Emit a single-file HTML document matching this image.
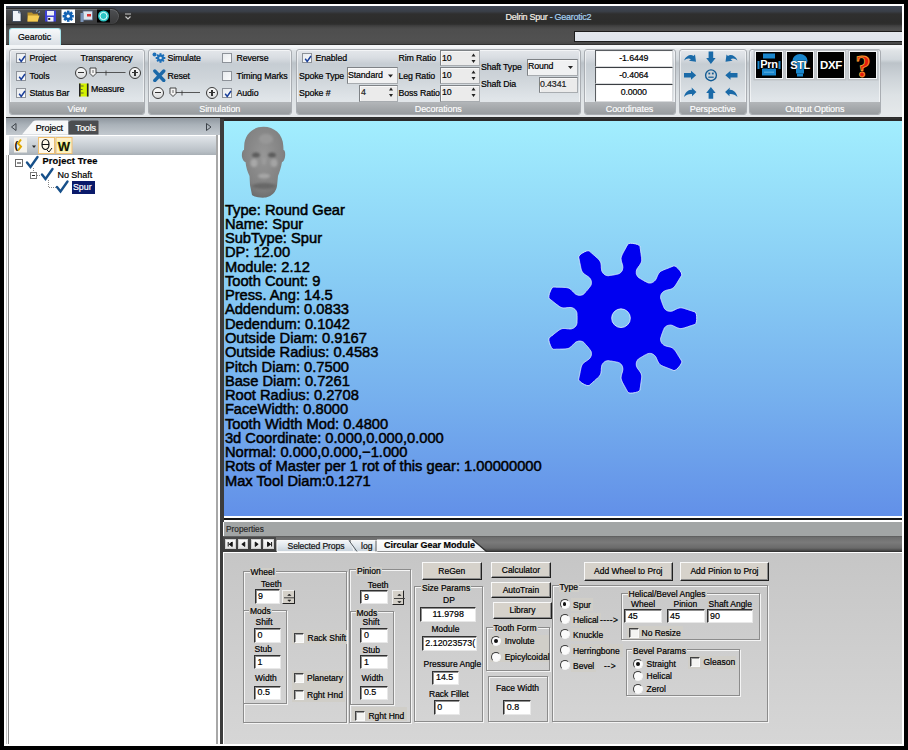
<!DOCTYPE html>
<html><head><meta charset="utf-8">
<style>
*{margin:0;padding:0;box-sizing:border-box}
html,body{width:908px;height:750px;overflow:hidden;background:#000}
body{position:relative;font-family:"Liberation Sans",sans-serif;font-size:9.4px;color:#000}
.a{position:absolute}
.t{position:absolute;white-space:nowrap;line-height:1;-webkit-text-stroke:.2px currentColor}
/* window */
#win{left:4px;top:4px;width:900px;height:742px;background:#fff}
#title{left:6px;top:6px;width:896px;height:19px;background:linear-gradient(#3f4654 0,#3a3f48 28%,#2f2f2f 42%,#2c2c2b 90%,#343434 100%)}
#tabrow{left:6px;top:25px;width:896px;height:21px;background:linear-gradient(#3a3a3a 0,#484848 12%,#4e4e4e 20%,#515151 70%,#4a4a4a 88%,#2c2c2c 94%,#303030 100%)}
#ribbon{left:6px;top:45px;width:896px;height:72px;background:linear-gradient(#f4f6f8 0,#f4f6f8 3%,#dfe3e6 8%,#d2d8dd 20%,#bcc3c9 25%,#cdd3d8 45%,#dde2e5 70%,#e6e9eb 100%)}
.grp{position:absolute;top:48.5px;height:66px;border:1px solid #a9adb2;border-radius:3px;background:linear-gradient(#e4e7eb 0,#d9dde2 12%,#c6cdd3 22%,#cfd5da 45%,#dfe4e8 75%,#e6eaed 100%);box-shadow:inset 0 0 0 1px rgba(255,255,255,.55)}
.glab{position:absolute;left:0;right:0;bottom:0;height:11.5px;background:linear-gradient(#b3b6b9,#989c9f);color:#fff;text-align:center;font-size:9px;line-height:14.3px;border-radius:0 0 2px 2px;-webkit-text-stroke:.15px #fff;letter-spacing:-.1px}
#sep{left:6px;top:117px;width:896px;height:3px;background:linear-gradient(#2a2a2a,#3a3a3a)}
/* left panel */
#lp{left:6px;top:119px;width:214px;height:625px;background:#fff}
#lptabs{left:6px;top:118px;width:214px;height:16.5px;background:linear-gradient(#8f979f,#aab2b9 40%,#c3c9cf)}
#lptool{left:9px;top:135.5px;width:208px;height:19.5px;background:linear-gradient(#e2e6ea,#cdd3d8 40%,#b9c0c6 80%,#a9b0b6)}
#split{left:219.5px;top:119px;width:4px;height:625px;background:#3c3c3c}
/* viewport */
#vp{left:224.4px;top:119px;width:677.6px;height:396.5px;background:linear-gradient(#a2eefe 0%,#88ccf4 40%,#76b0ee 70%,#6290e8 100%);border-top:2px solid #2a2a2a}
#vptext{left:224.9px;top:202.6px;font-size:14.7px;line-height:14.26px;color:#000;white-space:nowrap;-webkit-text-stroke:.5px #000}
/* properties */
#pwhite{left:224px;top:515.5px;width:678px;height:7px;background:#fff}
#pblack{left:224px;top:518px;width:678px;height:2px;background:#141414}
#phdr{left:223.3px;top:522px;width:678.7px;height:14px;background:#a2a5a5;border-left:1.2px solid #fff}
#ptabs{left:223.3px;top:536px;width:678.7px;height:15.5px;background:linear-gradient(#5a5a5a 0,#6e6e6e 10%,#7a7a7a 40%,#6a6a6a 75%,#4a4a4a 90%,#2a2a2a 100%)}
#pcont{left:223.3px;top:551.5px;width:678.7px;height:192.5px;background:linear-gradient(#c6c6c6,#d6d6d6);border-top:1.8px solid #fff;border-left:1.5px solid #fff}

.cb{position:absolute;width:10px;height:10px;border:1px solid #8d9299;background:linear-gradient(135deg,#e8ebee,#fbfcfd);}
.rt{font-size:8.8px;letter-spacing:-.12px}
.circ{position:absolute;width:12px;height:12px;border:1.2px solid #3a3a3a;border-radius:50%;background:linear-gradient(#fdfdfd,#d8dadc)}
.circ:before{content:"";position:absolute;left:2px;top:4.3px;width:6px;height:1.4px;background:#333}
.circ.p:after{content:"";position:absolute;left:4.3px;top:2px;width:1.4px;height:6px;background:#333}
.inp{position:absolute;background:#ebebeb;border:1px solid #7e8286;border-right-color:#a8acb0;border-bottom-color:#a8acb0;box-shadow:inset 1px 1px 0 #f8f8f8}
.sp{position:absolute;width:8px;height:14px}
.big{position:absolute;width:26px;height:26px;background:#000;outline:1.5px solid #f4f6f8;box-shadow:0 0 0 2.5px #c0c4c8}

.win{position:absolute;background:#fff;border-style:solid;border-width:1.5px 1px 1px 1.5px;border-color:#303030 #e8e8e8 #e8e8e8 #303030;box-shadow:inset 1px 1px 0 #909090}
.gb{position:absolute;border:1px solid #8c8c8c;box-shadow:1px 1px 0 #f4f4f4 inset,1px 1px 0 #f4f4f4}
.btn{position:absolute;background:#d6d2cb;border-style:solid;border-width:1px 1.5px 1.5px 1px;border-color:#f8f8f8 #202020 #202020 #f8f8f8;box-shadow:inset -1px -1px 0 #8c8c8c}
.wcb{position:absolute;width:10px;height:10px;background:#f4f4f2;border-style:solid;border-width:1.5px 1px 1px 1.5px;border-color:#404040 #fafafa #fafafa #404040;box-shadow:inset 1px 1px 0 #a0a0a0}
.rad{position:absolute;width:10px;height:10px;border-radius:50%;background:#fbfbfb;border:1.5px solid;border-color:#3a3a3a #f4f4f4 #f4f4f4 #3a3a3a;transform:rotate(0deg)}
.rad i{position:absolute;left:2px;top:2px;width:3.8px;height:3.8px;border-radius:50%;background:#111}
.spn{position:absolute;background:#d4d0c8;border-style:solid;border-width:1px 1.5px 1.5px 1px;border-color:#f0f0f0 #222 #222 #f0f0f0}
.nav{position:absolute;background:linear-gradient(#fafafa,#e4e4e4);border:.5px solid #d0d0d0}
</style></head><body>
<div id="win" class="a"></div>
<div id="title" class="a"></div>
<div id="tabrow" class="a"></div>
<!-- QAT -->
<div class="a" style="left:6px;top:8px;width:114px;height:17px;border-radius:0 9px 9px 0;background:linear-gradient(#4e5054,#434446 50%,#3a3a3b);border:1px solid #2a2a2a;border-left:none;box-shadow:inset 0 1px 0 rgba(255,255,255,.15),inset -1px 0 0 rgba(255,255,255,.1)"></div>
<svg class="a" style="left:0;top:0" width="130" height="26">
 <path d="M12.5 10.5h6l2.5 2.5v8.5h-8.5z" fill="#eef2f8" stroke="#24344c" stroke-width=".7"/>
 <path d="M18.5 10.5v2.5h2.5" fill="#a8bcd4" stroke="#24344c" stroke-width=".5"/>
 <path d="M27.5 12.5h4.5l1 1.3h5v7.7h-10.5z" fill="#b8902c"/><path d="M28 15.5h11.5l-1.8 6H27.5z" fill="#f4cc54"/>
 <path d="M36 11.5l1.5-1.2M38.5 12.5l1.5-.8" stroke="#8ab8e8" stroke-width="1"/>
 <rect x="45" y="10.5" width="11" height="11" fill="#3d40d8"/><rect x="47" y="11" width="7" height="4.5" fill="#eef0f8"/><rect x="47.5" y="17" width="6" height="4.5" fill="#eef0f8"/><rect x="48.2" y="18" width="2" height="2" fill="#222"/>
 <rect x="61.5" y="9.5" width="13.5" height="13.5" fill="#fff"/>
 <g transform="translate(68.2,16.2)" fill="#1262b4"><circle r="4"/><rect x="-1.3" y="-5.6" width="2.6" height="11.2"/><rect x="-5.6" y="-1.3" width="11.2" height="2.6"/><g transform="rotate(45)"><rect x="-1.3" y="-5.6" width="2.6" height="11.2"/><rect x="-5.6" y="-1.3" width="11.2" height="2.6"/></g><circle r="1.6" fill="#fff"/></g>
 <rect x="83" y="11" width="9.5" height="9" fill="#dce4ee" stroke="#5c7090" stroke-width=".8"/><rect x="80.5" y="13" width="3" height="9" fill="#7a94b8"/><rect x="87" y="14" width="4" height="2.5" fill="#d83030"/>
 <rect x="97" y="9.5" width="13" height="13" fill="#000"/><circle cx="103.5" cy="16" r="5.5" fill="#2cc4c4"/><circle cx="103.5" cy="16" r="3.6" fill="none" stroke="#e8ffff" stroke-width="1"/>
</svg>
<svg class="a" style="left:124px;top:13px" width="8" height="8"><path d="M1 1h6M1.5 3.5l2.5 2.5 2.5-2.5" stroke="#c8c8c8" stroke-width="1.2" fill="none"/></svg>
<div class="t" style="left:505.5px;top:12.6px;font-size:9px;letter-spacing:-.28px;color:#f4f0e8">Delrin Spur <span style="color:#a6d2f2">- Gearotic2</span></div>
<!-- tab -->
<div class="a" style="left:9px;top:28px;width:52px;height:19px;border-radius:3px 3px 0 0;background:linear-gradient(#f6f8fa,#e4e8ec 60%,#d8dde2);border:1px solid #a8e4ec;border-bottom:none"></div>
<div class="t" style="left:18px;top:33.3px;font-size:8.9px;letter-spacing:-.05px">Gearotic</div>
<div class="a" style="left:574px;top:30.5px;width:328px;height:11px;background:linear-gradient(#e4e8ee,#dfe4ec);border:1px solid #1c1c1c;border-right:none"></div>

<div id="ribbon" class="a"></div>
<div class="grp" style="left:9px;width:136px"><div class="glab">View</div></div>
<div class="grp" style="left:147.5px;width:144.5px"><div class="glab">Simulation</div></div>
<div class="grp" style="left:295.5px;width:285.5px"><div class="glab">Decorations</div></div>
<div class="grp" style="left:583.5px;width:92px"><div class="glab">Coordinates</div></div>
<div class="grp" style="left:679px;width:67.5px"><div class="glab">Perspective</div></div>
<div class="grp" style="left:749px;width:131.5px"><div class="glab">Output Options</div></div>

<!-- View group content -->
<div class="cb" style="left:15.5px;top:53px"><svg width="10" height="10" class="a" style="left:0;top:0"><path d="M2.2 4.8l2 2.6 3.8-5.4" stroke="#1a3f9a" stroke-width="1.5" fill="none"/></svg></div><div class="t rt" style="left:29.5px;top:54.2px">Project</div>
<div class="cb" style="left:15.5px;top:70.5px"><svg width="10" height="10" class="a" style="left:0;top:0"><path d="M2.2 4.8l2 2.6 3.8-5.4" stroke="#1a3f9a" stroke-width="1.5" fill="none"/></svg></div><div class="t rt" style="left:29.5px;top:71.7px">Tools</div>
<div class="cb" style="left:15.5px;top:87.5px"><svg width="10" height="10" class="a" style="left:0;top:0"><path d="M2.2 4.8l2 2.6 3.8-5.4" stroke="#1a3f9a" stroke-width="1.5" fill="none"/></svg></div><div class="t rt" style="left:29.5px;top:88.7px">Status Bar</div>
<div class="t rt" style="left:80.5px;top:54.2px">Transparency</div>
<div class="circ" style="left:75px;top:66.5px"></div>
<svg class="a" style="left:88px;top:66px" width="42" height="12"><path d="M6 6.5h31.5M18 4.5v5" stroke="#333" stroke-width=".8"/><path d="M2 2h6v5.5l-3 3-3-3z" fill="#f4f4f4" stroke="#333" stroke-width=".9"/><path d="M5 4v3" stroke="#333" stroke-width=".7"/></svg>
<div class="circ p" style="left:129px;top:66.5px"></div>
<svg class="a" style="left:79px;top:83px" width="11" height="14"><rect x="0" y="0.5" width="9.5" height="13" fill="#d4f200"/><rect x="0" y="0.5" width="1.6" height="13" fill="#222"/><rect x="7.9" y="0.5" width="1.6" height="13" fill="#222"/><path d="M1.6 3h3M1.6 6.5h2M1.6 10h3" stroke="#444" stroke-width=".8"/></svg>
<div class="t rt" style="left:91px;top:85.2px">Measure</div>
<!-- Simulation -->
<svg class="a" style="left:152px;top:52px" width="14" height="11"><circle cx="2.5" cy="2.5" r="2" fill="#1d6fb8"/><g transform="translate(8.5,6)" fill="#1d6fb8"><circle r="3.4"/><rect x="-1" y="-4.8" width="2" height="9.6"/><rect x="-4.8" y="-1" width="9.6" height="2"/><rect x="-1" y="-4.8" width="2" height="9.6" transform="rotate(45)"/><rect x="-4.8" y="-1" width="9.6" height="2" transform="rotate(45)"/><circle r="1.3" fill="#e0e4e8"/></g></svg>
<div class="t rt" style="left:167.5px;top:54.2px">Simulate</div>
<svg class="a" style="left:152px;top:68px" width="14" height="14"><path d="M2.8 3L11.8 12.5M11.8 3L2.8 12.5" stroke="#1a68a8" stroke-width="3.3" stroke-linecap="round"/></svg>
<div class="t rt" style="left:167.5px;top:71.7px">Reset</div>
<div class="circ" style="left:152px;top:86.5px"></div>
<svg class="a" style="left:168px;top:86px" width="34" height="12"><path d="M6 6.5h26M14 4.5v5" stroke="#333" stroke-width=".8"/><path d="M2 2h6v5.5l-3 3-3-3z" fill="#f4f4f4" stroke="#333" stroke-width=".9"/><path d="M5 4v3" stroke="#333" stroke-width=".7"/></svg>
<div class="circ p" style="left:206px;top:86.5px"></div>
<div class="cb" style="left:222px;top:53px"></div><div class="t rt" style="left:236.5px;top:54.2px">Reverse</div>
<div class="cb" style="left:222px;top:70.5px"></div><div class="t rt" style="left:236.5px;top:71.7px">Timing Marks</div>
<div class="cb" style="left:222px;top:87.5px"><svg width="10" height="10" class="a" style="left:0;top:0"><path d="M2.2 4.8l2 2.6 3.8-5.4" stroke="#1a3f9a" stroke-width="1.5" fill="none"/></svg></div><div class="t rt" style="left:236.5px;top:88.7px">Audio</div>
<!-- Decorations -->
<div class="cb" style="left:302px;top:53px"><svg width="10" height="10" class="a" style="left:0;top:0"><path d="M2.2 4.8l2 2.6 3.8-5.4" stroke="#1a3f9a" stroke-width="1.5" fill="none"/></svg></div><div class="t rt" style="left:315.5px;top:54.2px">Enabled</div>
<div class="t rt" style="left:299px;top:71.7px">Spoke Type</div>
<div class="t rt" style="left:299px;top:88.7px">Spoke #</div>
<div class="inp" style="left:346.5px;top:67px;width:51px;height:17px;background:#f0f1f2"></div><div class="t rt" style="left:348px;top:71.2px">Standard</div>
<div class="inp" style="left:358.5px;top:84.5px;width:39px;height:17px"></div><div class="t rt" style="left:361px;top:88.2px;color:#222">4</div>
<div class="t rt" style="left:398.5px;top:54.2px">Rim Ratio</div>
<div class="t rt" style="left:398.5px;top:71.7px">Leg Ratio</div>
<div class="t rt" style="left:398.5px;top:88.7px">Boss Ratio</div>
<div class="inp" style="left:440px;top:50px;width:39.5px;height:16px"></div><div class="t rt" style="left:442px;top:53.7px">10</div>
<div class="inp" style="left:440px;top:67px;width:39.5px;height:17px"></div><div class="t rt" style="left:442px;top:71.2px">10</div>
<div class="inp" style="left:440px;top:84.5px;width:39.5px;height:17px"></div><div class="t rt" style="left:442px;top:88.2px">10</div>
<div class="t rt" style="left:481px;top:62.7px">Shaft Type</div>
<div class="t rt" style="left:481px;top:80.2px">Shaft Dia</div>
<div class="inp" style="left:526.5px;top:58.5px;width:51px;height:17px;background:#f0f1f2"></div><div class="t rt" style="left:528px;top:62.2px">Round</div>
<div class="inp" style="left:538.5px;top:76.5px;width:39px;height:16px"></div><div class="t rt" style="left:540px;top:80.2px;color:#222">0.4341</div>
<svg class="a" style="left:340px;top:50px" width="240" height="52">
 <path d="M48 24.5h5l-2.5 3z" fill="#222"/>
 <path d="M228 16h5l-2.5 3z" fill="#222"/>
 <path d="M131.5 6.5l2-3 2 3zM131.5 10l2 3 2-3z" fill="#222"/>
 <path d="M131.5 23.5l2-3 2 3zM131.5 27l2 3 2-3z" fill="#222"/>
 <path d="M131.5 40.5l2-3 2 3zM131.5 44l2 3 2-3z" fill="#222"/>
 <path d="M49 40.5l2-3 2 3zM49 44l2 3 2-3z" fill="#222"/>
</svg>
<!-- Coordinates -->
<div class="inp" style="left:594.5px;top:49.5px;width:78.5px;height:17px;background:#fff;border-color:#5a5e62 #d8dadc #d8dadc #5a5e62"></div>
<div class="inp" style="left:594.5px;top:66.5px;width:78.5px;height:17.5px;background:#fff;border-color:#3a3e42 #d8dadc #d8dadc #5a5e62"></div>
<div class="inp" style="left:594.5px;top:84px;width:78.5px;height:17.5px;background:#fff;border-color:#3a3e42 #d8dadc #d8dadc #5a5e62"></div>
<div class="t rt" style="left:594.5px;width:78.5px;text-align:center;top:53.7px">-1.6449</div>
<div class="t rt" style="left:594.5px;width:78.5px;text-align:center;top:70.7px">-0.4064</div>
<div class="t rt" style="left:594.5px;width:78.5px;text-align:center;top:88.2px">0.0000</div>
<!-- Perspective -->
<svg class="a" style="left:680px;top:48px" width="64" height="54" viewBox="0 0 64 54" fill="#1a6aa8">
 <path d="M4 12.5C6 7.5 11 5.8 13.5 8L15 6.5 16 13.8 9 12.8 10.9 11.2C9 9.8 6.5 10.2 4 12.5Z"/>
 <path d="M57.5 12.5C55.5 7.5 50.5 5.8 48 8L46.5 6.5 45.5 13.8 52.5 12.8 50.6 11.2C52.5 9.8 55 10.2 57.5 12.5Z"/>
 <path d="M28.6 3.6H33.2V10H35.6L30.9 16 26.2 10H28.6Z"/>
 <path d="M28.6 50.7H33.2V45H35.6L30.9 39 26.2 45H28.6Z"/>
 <path d="M4 25H11V22.7L16.2 27.2 11 31.7V29.5H4Z"/>
 <path d="M57.5 25H50.5V22.7L45.3 27.2 50.5 31.7V29.5H57.5Z"/>
 <path d="M4 49C5 44 9 41 12 41.8L11.6 39.6 16.4 44 12 48.2V46C9 45.6 6 47 4 49Z"/>
 <path d="M57.5 49C56.5 44 52.5 41 49.5 41.8L49.9 39.6 45.1 44 49.5 48.2V46C52.5 45.6 55.5 47 57.5 49Z"/>
 <circle cx="31" cy="27.3" r="5.4" fill="none" stroke="#135c94" stroke-width="1.4"/>
 <rect x="28.4" y="24.6" width="1.8" height="1.8" fill="#135c94"/><rect x="31.9" y="24.6" width="1.8" height="1.8" fill="#135c94"/><rect x="28.3" y="28.6" width="5.4" height="1.2" fill="#135c94"/>
</svg>
<!-- Output Options -->
<div class="big" style="left:755.5px;top:51.5px"><svg width="26" height="26"><rect x="7" y="1.5" width="12" height="5" fill="#1a86cc"/><path d="M2.5 9v8M23.5 9v8" stroke="#1a86cc" stroke-width="2"/><rect x="6" y="16.5" width="14" height="7" fill="#1a86cc"/><rect x="8" y="19.5" width="10" height="1.5" fill="#4aa4dc"/><text x="13" y="15.5" font-size="11" font-weight="bold" font-family="Liberation Sans" fill="#fff" stroke="#000" stroke-width=".8" paint-order="stroke" text-anchor="middle" letter-spacing="-.3">Prn</text></svg></div>
<div class="big" style="left:786.5px;top:51.5px"><svg width="26" height="26"><path d="M13 2a7.5 6.5 0 0 1 7.5 6.5c0 3-2.5 4-3.5 6v7h-8v-7c-1-2-3.5-3-3.5-6A7.5 6.5 0 0 1 13 2z" fill="#1a86cc"/><rect x="10" y="21.5" width="6" height="3" fill="#1a86cc"/><text x="13" y="16.5" font-size="11" font-weight="bold" font-family="Liberation Sans" fill="#fff" stroke="#000" stroke-width=".6" paint-order="stroke" text-anchor="middle" letter-spacing="-.4">STL</text></svg></div>
<div class="big" style="left:818px;top:51.5px"><svg width="26" height="26"><text x="13" y="16.5" font-size="11.5" font-weight="bold" font-family="Liberation Sans" fill="#fff" text-anchor="middle" letter-spacing="-.4">DXF</text></svg></div>
<div class="big" style="left:849.5px;top:51.5px"><svg width="26" height="26"><text x="13" y="24.5" font-size="31" font-weight="bold" font-family="Liberation Serif" fill="#e81c0c" stroke="#f0a030" stroke-width=".9" text-anchor="middle">?</text></svg></div>
<div id="sep" class="a"></div>
<div id="lp" class="a"></div>
<div id="lptabs" class="a"></div>
<div id="lptool" class="a"></div>

<svg class="a" style="left:6px;top:118px" width="214" height="17">
 <path d="M10 5.5v7l-4.5-3.5z" fill="none" stroke="#3c4248" stroke-width="1"/>
 <path d="M200.5 5.5v7l4.5-3.5z" fill="none" stroke="#3c4248" stroke-width="1"/>
 <path d="M16 16.5l11-13q1-1 3-1h32v14z" fill="#f7f8f9"/>
 <path d="M62.5 16.5v-12q1-2 3-2h26q1 0 1 1v13z" fill="#4b4d50"/>
</svg>
<div class="t" style="left:35.7px;top:124px;font-size:9px;letter-spacing:-.1px">Project</div>
<div class="t" style="left:75.5px;top:124px;font-size:9px;letter-spacing:-.1px;color:#fff">Tools</div>
<svg class="a" style="left:9px;top:135.5px" width="70" height="20">
 <rect x="5" y="1.5" width="13" height="15" fill="#f4f2ec"/>
 <text x="5.5" y="13" font-size="11" font-family="Liberation Sans" font-weight="bold" fill="#111">(</text>
 <path d="M12 3.5l-3 4 3 3-3 4" stroke="#e0a800" stroke-width="2" fill="none"/>
 <path d="M23 9.5h4l-2 2.5z" fill="#222"/>
 <rect x="29.5" y="1.5" width="16" height="16" fill="#fff8e8" stroke="#f0c070" stroke-width="1"/>
 <ellipse cx="36.5" cy="8.5" rx="3.5" ry="5" fill="none" stroke="#111" stroke-width="1.2"/><path d="M33 8.5h7M38 14l2 2 3-4" stroke="#111" stroke-width="1" fill="none"/>
 <rect x="47" y="1.5" width="16" height="16" fill="#fdf0c8" stroke="#f0c070" stroke-width="1"/>
 <text x="55" y="14.5" font-size="13" font-weight="bold" font-family="Liberation Sans" fill="#111" stroke="#d8f000" stroke-width=".7" paint-order="stroke" text-anchor="middle">W</text>
</svg>
<!-- tree -->
<svg class="a" style="left:6px;top:155px" width="100" height="40">
 <rect x="9.5" y="4.5" width="7" height="7" fill="#fff" stroke="#6a6a6a" stroke-width="1"/><path d="M11 8h4" stroke="#222" stroke-width="1"/>
 <path d="M21 7.5l3.5 4.5 7-10" stroke="#17508a" stroke-width="2.4" fill="none" stroke-linecap="round"/>
 <path d="M27.5 13v4" stroke="#888" stroke-width="1" stroke-dasharray="1 1"/>
 <rect x="24.5" y="17.5" width="6" height="6" fill="#fff" stroke="#7a7a7a" stroke-width="1"/><path d="M26 20.5h3" stroke="#222" stroke-width="1"/>
 <path d="M31 20.5h3" stroke="#888" stroke-width="1" stroke-dasharray="1 1"/>
 <path d="M36 19.5l3.5 4.5 7-10" stroke="#17508a" stroke-width="2.4" fill="none" stroke-linecap="round"/>
 <path d="M42.5 25v7.5h8" stroke="#888" stroke-width="1" stroke-dasharray="1 1" fill="none"/>
 <path d="M51 32l3.5 4.5 7-10" stroke="#17508a" stroke-width="2.4" fill="none" stroke-linecap="round"/>
</svg>
<div class="t" style="left:42.5px;top:157.3px;font-size:9.3px;font-weight:bold;letter-spacing:.15px">Project Tree</div>
<div class="t" style="left:57.5px;top:170.6px;font-size:9px;letter-spacing:-.05px">No Shaft</div>
<div class="a" style="left:72px;top:181.2px;width:22.5px;height:12.5px;background:#0a1a6a"></div>
<div class="t" style="left:73px;top:183px;font-size:8.8px;color:#fff">Spur</div>
<div class="a" style="left:6px;top:155px;width:1px;height:589px;background:#c8c8c8"></div>
<div class="a" style="left:8px;top:155px;width:1px;height:589px;background:#8c8c8c"></div>
<div class="a" style="left:216px;top:134.5px;width:1.5px;height:609.5px;background:#a8a8a8"></div>
<div id="split" class="a"></div>
<div id="vp" class="a"></div>

<svg class="a" style="left:0;top:0" width="908" height="750">
 <defs><radialGradient id="hg" cx="0.5" cy="0.4" r="0.65"><stop offset="0" stop-color="#969696"/><stop offset=".7" stop-color="#828282"/><stop offset="1" stop-color="#686868"/></radialGradient>
 <filter id="hb" x="-20%" y="-20%" width="140%" height="140%"><feGaussianBlur stdDeviation="1.3"/></filter>
 <clipPath id="hc"><path id="hp" d="M263.5 126.8C274 126.8 283 134 283.3 146L283.5 150C285 150 285.5 153 285 157C284.5 160 283 162 282 162C281 168 279.5 172 278 176L277 186C276 192 272 196 266 197.5C260 198 254 197 252 195L250 185L249.5 176C247.5 172 246 167 245.5 162C244.5 162 242.5 160 242 157C241.5 153 242.5 150 244 150L244.2 146C244.5 134 253 126.8 263.5 126.8Z"/></clipPath></defs>
 <path d="M263.5 126.8C274 126.8 283 134 283.3 146L283.5 150C285 150 285.5 153 285 157C284.5 160 283 162 282 162C281 168 279.5 172 278 176L277 186C276 192 272 196 266 197.5C260 198 254 197 252 195L250 185L249.5 176C247.5 172 246 167 245.5 162C244.5 162 242.5 160 242 157C241.5 153 242.5 150 244 150L244.2 146C244.5 134 253 126.8 263.5 126.8Z" fill="url(#hg)"/>
 <g clip-path="url(#hc)" filter="url(#hb)">
  <ellipse cx="266" cy="139" rx="7" ry="5" fill="#989898"/>
  <ellipse cx="256" cy="155" rx="4" ry="2.5" fill="#5c5c5c"/><ellipse cx="272" cy="155" rx="4" ry="2.5" fill="#5c5c5c"/>
  <ellipse cx="254" cy="163" rx="3.5" ry="4" fill="#a8a8a8"/><ellipse cx="274" cy="163" rx="3.5" ry="4" fill="#a4a4a4"/>
  <ellipse cx="264" cy="161" rx="2" ry="4" fill="#9c9c9c"/>
  <ellipse cx="264" cy="176" rx="6" ry="2.5" fill="#a6a6a6"/>
  <ellipse cx="264" cy="186" rx="12" ry="3" fill="#686868"/>
 </g>
 <path d="M665.2 327.2 L665.6 326.7 L666.1 326.4 L666.6 326.0 L667.1 325.8 L667.7 325.5 L668.3 325.4 L668.9 325.2 L669.6 325.2 L670.4 325.1 L671.1 325.2 L671.9 325.3 L672.6 325.5 L673.3 325.9 L674.0 326.2 L674.7 326.5 L675.4 326.9 L676.1 327.2 L676.8 327.6 L677.6 327.9 L678.3 328.1 L679.0 328.4 L679.7 328.5 L680.5 328.6 L681.2 328.6 L682.0 328.4 L682.8 328.3 L683.6 328.1 L684.4 327.9 L685.2 327.6 L686.0 327.4 L686.8 327.1 L687.6 326.9 L688.3 326.6 L689.1 326.3 L689.9 326.1 L690.7 325.8 L691.5 325.6 L692.3 325.3 L693.2 325.0 L694.2 324.7 L695.2 324.3 L695.9 323.4 L696.4 321.8 L696.7 319.6 L696.7 316.8 L696.4 314.6 L695.9 313.0 L695.2 312.1 L694.2 311.7 L693.2 311.4 L692.3 311.1 L691.5 310.8 L690.7 310.6 L689.9 310.3 L689.1 310.1 L688.3 309.8 L687.6 309.5 L686.8 309.3 L686.0 309.0 L685.2 308.8 L684.4 308.5 L683.6 308.3 L682.8 308.1 L682.0 307.9 L681.2 307.8 L680.5 307.8 L679.7 307.9 L679.0 308.0 L678.3 308.3 L677.6 308.5 L676.8 308.8 L676.1 309.2 L675.4 309.5 L674.7 309.9 L674.0 310.2 L673.3 310.5 L672.6 310.9 L671.9 311.1 L671.1 311.2 L670.4 311.3 L669.6 311.2 L668.9 311.2 L668.3 311.0 L667.7 310.9 L667.1 310.6 L666.6 310.4 L666.1 310.0 L665.6 309.7 L665.2 309.2 L664.7 308.8 L664.4 308.3 L664.1 307.8 L663.9 307.2 L663.7 306.7 L663.4 306.2 L663.2 305.6 L663.0 305.1 L662.8 304.5 L662.6 304.0 L662.4 303.5 L662.2 302.9 L662.0 302.4 L661.8 301.8 L661.6 301.3 L661.4 300.7 L661.3 300.2 L661.1 299.6 L660.9 299.0 L660.7 298.5 L660.6 297.9 L660.6 297.3 L660.6 296.7 L660.7 296.1 L660.8 295.5 L661.0 294.9 L661.2 294.3 L661.5 293.8 L661.8 293.3 L662.2 292.8 L662.7 292.3 L663.3 291.8 L663.9 291.3 L664.6 291.0 L665.3 290.7 L666.0 290.4 L666.7 290.2 L667.5 290.0 L668.3 289.8 L669.0 289.7 L669.8 289.5 L670.5 289.3 L671.3 289.0 L672.0 288.7 L672.6 288.3 L673.2 287.9 L673.8 287.4 L674.3 286.8 L674.8 286.2 L675.3 285.6 L675.8 284.9 L676.2 284.2 L676.7 283.5 L677.1 282.8 L677.6 282.1 L678.0 281.3 L678.4 280.6 L678.9 279.9 L679.3 279.2 L679.7 278.5 L680.2 277.8 L680.7 277.0 L681.2 276.1 L681.8 275.2 L681.7 274.0 L681.1 272.5 L679.9 270.6 L678.1 268.5 L676.5 267.0 L675.1 266.1 L673.9 265.8 L672.9 266.2 L672.0 266.6 L671.1 266.9 L670.3 267.3 L669.5 267.6 L668.7 267.9 L668.0 268.2 L667.2 268.5 L666.4 268.8 L665.6 269.1 L664.9 269.4 L664.1 269.7 L663.3 270.0 L662.6 270.4 L661.8 270.7 L661.2 271.1 L660.5 271.5 L659.9 272.0 L659.4 272.6 L658.9 273.1 L658.5 273.8 L658.1 274.4 L657.8 275.1 L657.4 275.8 L657.1 276.6 L656.8 277.3 L656.5 278.0 L656.2 278.7 L655.8 279.4 L655.4 280.0 L654.9 280.6 L654.4 281.1 L653.8 281.6 L653.2 282.0 L652.6 282.3 L652.0 282.6 L651.5 282.8 L650.9 282.9 L650.3 283.0 L649.7 283.0 L649.1 283.0 L648.5 282.9 L647.9 282.7 L647.3 282.5 L646.8 282.2 L646.3 282.0 L645.8 281.7 L645.2 281.4 L644.7 281.2 L644.2 280.9 L643.7 280.6 L643.2 280.3 L642.7 280.0 L642.2 279.7 L641.7 279.4 L641.2 279.1 L640.7 278.8 L640.2 278.5 L639.7 278.2 L639.2 277.9 L638.7 277.6 L638.3 277.2 L637.9 276.8 L637.5 276.3 L637.2 275.7 L636.9 275.2 L636.6 274.6 L636.5 274.1 L636.3 273.5 L636.3 272.9 L636.3 272.2 L636.3 271.5 L636.4 270.8 L636.6 270.0 L636.9 269.3 L637.2 268.7 L637.6 268.0 L638.1 267.4 L638.5 266.7 L639.0 266.1 L639.5 265.5 L639.9 264.8 L640.3 264.2 L640.7 263.5 L641.1 262.9 L641.3 262.2 L641.5 261.4 L641.7 260.7 L641.7 259.9 L641.7 259.1 L641.6 258.3 L641.6 257.5 L641.4 256.6 L641.3 255.8 L641.2 255.0 L641.1 254.2 L641.0 253.3 L640.8 252.5 L640.7 251.7 L640.6 250.9 L640.5 250.1 L640.4 249.2 L640.2 248.3 L640.1 247.3 L639.9 246.2 L639.1 245.3 L637.6 244.5 L635.5 243.9 L632.8 243.4 L630.6 243.3 L628.9 243.5 L627.9 244.1 L627.4 245.0 L626.9 245.9 L626.4 246.7 L626.0 247.5 L625.6 248.2 L625.2 249.0 L624.8 249.7 L624.4 250.4 L624.0 251.1 L623.6 251.9 L623.2 252.6 L622.8 253.4 L622.4 254.1 L622.1 254.8 L621.8 255.6 L621.5 256.3 L621.3 257.1 L621.1 257.8 L621.0 258.6 L621.1 259.3 L621.2 260.1 L621.3 260.8 L621.5 261.6 L621.7 262.3 L621.9 263.1 L622.2 263.8 L622.4 264.6 L622.6 265.3 L622.7 266.1 L622.8 266.9 L622.8 267.6 L622.7 268.4 L622.6 269.1 L622.4 269.8 L622.2 270.4 L621.9 271.0 L621.6 271.5 L621.2 271.9 L620.8 272.4 L620.3 272.8 L619.8 273.2 L619.3 273.5 L618.8 273.7 L618.2 273.9 L617.7 274.1 L617.1 274.2 L616.5 274.3 L615.9 274.4 L615.4 274.6 L614.8 274.7 L614.2 274.8 L613.7 274.9 L613.1 275.0 L612.5 275.1 L611.9 275.2 L611.4 275.3 L610.8 275.3 L610.2 275.4 L609.6 275.5 L609.1 275.6 L608.5 275.7 L607.9 275.7 L607.3 275.6 L606.7 275.5 L606.1 275.3 L605.5 275.1 L605.0 274.8 L604.5 274.5 L604.0 274.1 L603.6 273.7 L603.1 273.2 L602.7 272.6 L602.3 272.0 L602.0 271.3 L601.7 270.6 L601.6 269.8 L601.5 269.1 L601.4 268.3 L601.3 267.5 L601.3 266.7 L601.3 265.9 L601.2 265.2 L601.1 264.4 L601.0 263.6 L600.8 262.9 L600.6 262.2 L600.2 261.5 L599.8 260.9 L599.4 260.2 L598.9 259.6 L598.3 259.0 L597.7 258.5 L597.1 257.9 L596.5 257.3 L595.8 256.8 L595.2 256.2 L594.6 255.7 L594.0 255.1 L593.4 254.6 L592.7 254.0 L592.1 253.5 L591.5 252.9 L590.8 252.3 L590.0 251.6 L589.2 250.9 L588.0 250.7 L586.4 251.1 L584.4 251.9 L581.9 253.3 L580.2 254.7 L579.1 255.9 L578.6 257.0 L578.8 258.1 L579.0 259.0 L579.2 260.0 L579.4 260.8 L579.6 261.6 L579.7 262.4 L579.9 263.3 L580.1 264.1 L580.2 264.9 L580.4 265.7 L580.6 266.5 L580.7 267.3 L580.9 268.2 L581.1 269.0 L581.3 269.7 L581.6 270.5 L581.9 271.2 L582.3 271.9 L582.7 272.5 L583.2 273.1 L583.8 273.6 L584.3 274.1 L585.0 274.5 L585.6 275.0 L586.3 275.4 L586.9 275.8 L587.6 276.3 L588.2 276.7 L588.8 277.2 L589.4 277.7 L589.9 278.3 L590.3 278.9 L590.7 279.6 L590.9 280.2 L591.2 280.8 L591.3 281.4 L591.4 282.0 L591.4 282.6 L591.4 283.2 L591.3 283.8 L591.2 284.4 L591.0 285.0 L590.7 285.6 L590.4 286.1 L590.1 286.5 L589.7 287.0 L589.3 287.5 L589.0 287.9 L588.6 288.4 L588.3 288.9 L587.9 289.3 L587.5 289.8 L587.2 290.2 L586.8 290.6 L586.4 291.1 L586.0 291.5 L585.6 291.9 L585.2 292.4 L584.8 292.8 L584.4 293.2 L584.1 293.7 L583.6 294.1 L583.1 294.4 L582.6 294.7 L582.0 294.9 L581.4 295.1 L580.8 295.2 L580.2 295.3 L579.7 295.3 L579.0 295.3 L578.4 295.2 L577.7 295.0 L577.0 294.8 L576.3 294.5 L575.6 294.1 L575.0 293.6 L574.5 293.1 L573.9 292.6 L573.3 292.0 L572.8 291.4 L572.3 290.8 L571.7 290.3 L571.2 289.8 L570.6 289.3 L570.0 288.8 L569.3 288.4 L568.7 288.1 L567.9 287.9 L567.2 287.7 L566.4 287.6 L565.6 287.5 L564.8 287.4 L563.9 287.4 L563.1 287.3 L562.2 287.3 L561.4 287.3 L560.6 287.3 L559.8 287.2 L558.9 287.2 L558.1 287.2 L557.3 287.2 L556.4 287.2 L555.4 287.1 L554.4 287.1 L553.4 287.1 L552.3 287.7 L551.3 289.0 L550.4 291.0 L549.4 293.6 L548.9 295.8 L548.8 297.4 L549.2 298.6 L550.0 299.2 L550.8 299.9 L551.6 300.4 L552.2 301.0 L552.9 301.5 L553.5 302.0 L554.2 302.5 L554.8 303.1 L555.5 303.6 L556.1 304.1 L556.8 304.6 L557.5 305.1 L558.1 305.6 L558.8 306.1 L559.5 306.6 L560.2 307.0 L560.9 307.3 L561.6 307.6 L562.3 307.8 L563.0 307.9 L563.8 308.0 L564.5 307.9 L565.3 307.9 L566.1 307.8 L566.9 307.7 L567.7 307.6 L568.4 307.6 L569.2 307.5 L570.0 307.5 L570.8 307.5 L571.5 307.6 L572.2 307.8 L572.9 308.1 L573.6 308.4 L574.1 308.8 L574.6 309.1 L575.1 309.5 L575.5 310.0 L575.8 310.4 L576.2 311.0 L576.4 311.5 L576.7 312.1 L576.8 312.7 L576.9 313.2 L577.0 313.8 L577.0 314.4 L577.0 315.0 L577.0 315.6 L577.1 316.2 L577.1 316.8 L577.1 317.3 L577.1 317.9 L577.1 318.5 L577.1 319.1 L577.1 319.6 L577.1 320.2 L577.0 320.8 L577.0 321.4 L577.0 322.0 L577.0 322.6 L576.9 323.2 L576.8 323.7 L576.7 324.3 L576.4 324.9 L576.2 325.4 L575.8 326.0 L575.5 326.4 L575.1 326.9 L574.6 327.3 L574.1 327.6 L573.6 328.0 L572.9 328.3 L572.2 328.6 L571.5 328.8 L570.8 328.9 L570.0 328.9 L569.2 328.9 L568.4 328.8 L567.7 328.8 L566.9 328.7 L566.1 328.6 L565.3 328.5 L564.5 328.5 L563.8 328.4 L563.0 328.5 L562.3 328.6 L561.6 328.8 L560.9 329.1 L560.2 329.4 L559.5 329.8 L558.8 330.3 L558.1 330.8 L557.5 331.3 L556.8 331.8 L556.1 332.3 L555.5 332.8 L554.8 333.3 L554.2 333.9 L553.5 334.4 L552.9 334.9 L552.2 335.4 L551.6 336.0 L550.8 336.5 L550.0 337.2 L549.2 337.8 L548.8 339.0 L548.9 340.6 L549.4 342.8 L550.4 345.4 L551.3 347.4 L552.3 348.7 L553.4 349.3 L554.4 349.3 L555.4 349.3 L556.4 349.2 L557.3 349.2 L558.1 349.2 L558.9 349.2 L559.8 349.2 L560.6 349.1 L561.4 349.1 L562.2 349.1 L563.1 349.1 L563.9 349.0 L564.8 349.0 L565.6 348.9 L566.4 348.8 L567.2 348.7 L567.9 348.5 L568.7 348.3 L569.3 348.0 L570.0 347.6 L570.6 347.1 L571.2 346.6 L571.7 346.1 L572.3 345.6 L572.8 345.0 L573.3 344.4 L573.9 343.8 L574.5 343.3 L575.0 342.8 L575.6 342.3 L576.3 341.9 L577.0 341.6 L577.7 341.4 L578.4 341.2 L579.0 341.1 L579.7 341.1 L580.2 341.1 L580.8 341.2 L581.4 341.3 L582.0 341.5 L582.6 341.7 L583.1 342.0 L583.6 342.3 L584.1 342.7 L584.4 343.2 L584.8 343.6 L585.2 344.0 L585.6 344.5 L586.0 344.9 L586.4 345.3 L586.8 345.8 L587.2 346.2 L587.5 346.6 L587.9 347.1 L588.3 347.5 L588.6 348.0 L589.0 348.5 L589.3 348.9 L589.7 349.4 L590.1 349.9 L590.4 350.3 L590.7 350.8 L591.0 351.4 L591.2 352.0 L591.3 352.6 L591.4 353.2 L591.4 353.8 L591.4 354.4 L591.3 355.0 L591.2 355.6 L590.9 356.2 L590.7 356.8 L590.3 357.5 L589.9 358.1 L589.4 358.7 L588.8 359.2 L588.2 359.7 L587.6 360.1 L586.9 360.6 L586.3 361.0 L585.6 361.4 L585.0 361.9 L584.3 362.3 L583.8 362.8 L583.2 363.3 L582.7 363.9 L582.3 364.5 L581.9 365.2 L581.6 365.9 L581.3 366.7 L581.1 367.4 L580.9 368.2 L580.7 369.1 L580.6 369.9 L580.4 370.7 L580.2 371.5 L580.1 372.3 L579.9 373.1 L579.7 374.0 L579.6 374.8 L579.4 375.6 L579.2 376.4 L579.0 377.4 L578.8 378.3 L578.6 379.4 L579.1 380.5 L580.2 381.7 L581.9 383.1 L584.4 384.5 L586.4 385.3 L588.0 385.7 L589.2 385.5 L590.0 384.8 L590.8 384.1 L591.5 383.5 L592.1 382.9 L592.7 382.4 L593.4 381.8 L594.0 381.3 L594.6 380.7 L595.2 380.2 L595.8 379.6 L596.5 379.1 L597.1 378.5 L597.7 377.9 L598.3 377.4 L598.9 376.8 L599.4 376.2 L599.8 375.5 L600.2 374.9 L600.6 374.2 L600.8 373.5 L601.0 372.8 L601.1 372.0 L601.2 371.2 L601.3 370.5 L601.3 369.7 L601.3 368.9 L601.4 368.1 L601.5 367.3 L601.6 366.6 L601.7 365.8 L602.0 365.1 L602.3 364.4 L602.7 363.8 L603.1 363.2 L603.6 362.7 L604.0 362.3 L604.5 361.9 L605.0 361.6 L605.5 361.3 L606.1 361.1 L606.7 360.9 L607.3 360.8 L607.9 360.7 L608.5 360.7 L609.1 360.8 L609.6 360.9 L610.2 361.0 L610.8 361.1 L611.4 361.1 L611.9 361.2 L612.5 361.3 L613.1 361.4 L613.7 361.5 L614.2 361.6 L614.8 361.7 L615.4 361.8 L615.9 362.0 L616.5 362.1 L617.1 362.2 L617.7 362.3 L618.2 362.5 L618.8 362.7 L619.3 362.9 L619.8 363.2 L620.3 363.6 L620.8 364.0 L621.2 364.5 L621.6 364.9 L621.9 365.4 L622.2 366.0 L622.4 366.6 L622.6 367.3 L622.7 368.0 L622.8 368.8 L622.8 369.5 L622.7 370.3 L622.6 371.1 L622.4 371.8 L622.2 372.6 L621.9 373.3 L621.7 374.1 L621.5 374.8 L621.3 375.6 L621.2 376.3 L621.1 377.1 L621.0 377.8 L621.1 378.6 L621.3 379.3 L621.5 380.1 L621.8 380.8 L622.1 381.6 L622.4 382.3 L622.8 383.0 L623.2 383.8 L623.6 384.5 L624.0 385.3 L624.4 386.0 L624.8 386.7 L625.2 387.4 L625.6 388.2 L626.0 388.9 L626.4 389.7 L626.9 390.5 L627.4 391.4 L627.9 392.3 L628.9 392.9 L630.6 393.1 L632.8 393.0 L635.5 392.5 L637.6 391.9 L639.1 391.1 L639.9 390.2 L640.1 389.1 L640.2 388.1 L640.4 387.2 L640.5 386.3 L640.6 385.5 L640.7 384.7 L640.8 383.9 L641.0 383.1 L641.1 382.2 L641.2 381.4 L641.3 380.6 L641.4 379.8 L641.6 378.9 L641.6 378.1 L641.7 377.3 L641.7 376.5 L641.7 375.7 L641.5 375.0 L641.3 374.2 L641.1 373.5 L640.7 372.9 L640.3 372.2 L639.9 371.6 L639.5 370.9 L639.0 370.3 L638.5 369.7 L638.1 369.0 L637.6 368.4 L637.2 367.7 L636.9 367.1 L636.6 366.4 L636.4 365.6 L636.3 364.9 L636.3 364.2 L636.3 363.5 L636.3 362.9 L636.5 362.3 L636.6 361.8 L636.9 361.2 L637.2 360.7 L637.5 360.1 L637.9 359.6 L638.3 359.2 L638.7 358.8 L639.2 358.5 L639.7 358.2 L640.2 357.9 L640.7 357.6 L641.2 357.3 L641.7 357.0 L642.2 356.7 L642.7 356.4 L643.2 356.1 L643.7 355.8 L644.2 355.5 L644.7 355.2 L645.2 355.0 L645.8 354.7 L646.3 354.4 L646.8 354.2 L647.3 353.9 L647.9 353.7 L648.5 353.5 L649.1 353.4 L649.7 353.4 L650.3 353.4 L650.9 353.5 L651.5 353.6 L652.0 353.8 L652.6 354.1 L653.2 354.4 L653.8 354.8 L654.4 355.3 L654.9 355.8 L655.4 356.4 L655.8 357.0 L656.2 357.7 L656.5 358.4 L656.8 359.1 L657.1 359.8 L657.4 360.6 L657.8 361.3 L658.1 362.0 L658.5 362.6 L658.9 363.3 L659.4 363.8 L659.9 364.4 L660.5 364.9 L661.2 365.3 L661.8 365.7 L662.6 366.0 L663.3 366.4 L664.1 366.7 L664.9 367.0 L665.6 367.3 L666.4 367.6 L667.2 367.9 L668.0 368.2 L668.7 368.5 L669.5 368.8 L670.3 369.1 L671.1 369.5 L672.0 369.8 L672.9 370.2 L673.9 370.6 L675.1 370.3 L676.5 369.4 L678.1 367.9 L679.9 365.8 L681.1 363.9 L681.7 362.4 L681.8 361.2 L681.2 360.3 L680.7 359.4 L680.2 358.6 L679.7 357.9 L679.3 357.2 L678.9 356.5 L678.4 355.8 L678.0 355.1 L677.6 354.3 L677.1 353.6 L676.7 352.9 L676.2 352.2 L675.8 351.5 L675.3 350.8 L674.8 350.2 L674.3 349.6 L673.8 349.0 L673.2 348.5 L672.6 348.1 L672.0 347.7 L671.3 347.4 L670.5 347.1 L669.8 346.9 L669.0 346.7 L668.3 346.6 L667.5 346.4 L666.7 346.2 L666.0 346.0 L665.3 345.7 L664.6 345.4 L663.9 345.1 L663.3 344.6 L662.7 344.1 L662.2 343.6 L661.8 343.1 L661.5 342.6 L661.2 342.1 L661.0 341.5 L660.8 340.9 L660.7 340.3 L660.6 339.7 L660.6 339.1 L660.6 338.5 L660.7 337.9 L660.9 337.4 L661.1 336.8 L661.3 336.2 L661.4 335.7 L661.6 335.1 L661.8 334.6 L662.0 334.0 L662.2 333.5 L662.4 332.9 L662.6 332.4 L662.8 331.9 L663.0 331.3 L663.2 330.8 L663.4 330.2 L663.7 329.7 L663.9 329.2 L664.1 328.6 L664.4 328.1 L664.7 327.6Z M630.3 318.2 A9.3 9.3 0 1 0 611.7 318.2 A9.3 9.3 0 1 0 630.3 318.2Z" fill="#0000f0" fill-rule="evenodd" stroke="#d8ecff" stroke-width="0.9"/>
</svg>
<div id="vptext" class="t" style="line-height:14.26px">Type: Round Gear<br>Name: Spur<br>SubType: Spur<br>DP: 12.00<br>Module: 2.12<br>Tooth Count: 9<br>Press. Ang: 14.5<br>Addendum: 0.0833<br>Dedendum: 0.1042<br>Outside Diam: 0.9167<br>Outside Radius: 0.4583<br>Pitch Diam: 0.7500<br>Base Diam: 0.7261<br>Root Radius: 0.2708<br>FaceWidth: 0.8000<br>Tooth Width Mod: 0.4800<br>3d Coordinate: 0.000,0.000,0.000<br>Normal: 0.000,0.000,&minus;1.000<br>Rots of Master per 1 rot of this gear: 1.00000000<br>Max Tool Diam:0.1271</div>
<div id="pwhite" class="a"></div>
<div id="pblack" class="a"></div>
<div id="phdr" class="a"></div>
<div id="ptabs" class="a"></div>
<div id="pcont" class="a"></div>
<div class="t" style="left:226px;top:524.67px;font-size:8.3px;color:#2a2a2a;">Properties</div>
<div class="a" style="left:223.3px;top:536.5px;width:53px;height:15px;background:linear-gradient(#4a4a4a,#3a3a3a)"></div>
<div class="nav" style="left:225px;top:538.7px;width:10.699999999999989px;height:10.1px"></div>
<div class="nav" style="left:237.9px;top:538.7px;width:10.099999999999994px;height:10.1px"></div>
<div class="nav" style="left:250.6px;top:538.7px;width:10.500000000000028px;height:10.1px"></div>
<div class="nav" style="left:263px;top:538.7px;width:10.600000000000023px;height:10.1px"></div>
<svg class="a" style="left:225px;top:538.7px" width="50" height="11">
<path d="M3.2 3v4.5M7.2 3l-3 2.25 3 2.25z" stroke="#111" stroke-width="1" fill="#111"/>
<path d="M19.8 3l-3 2.25 3 2.25z" fill="#111" stroke="#111" stroke-width=".8"/>
<path d="M30.2 3l3 2.25-3 2.25z" fill="#111" stroke="#111" stroke-width=".8"/>
<path d="M42.6 3l3 2.25-3 2.25zM46.6 3v4.5" fill="#111" stroke="#111" stroke-width="1"/>
</svg>
<svg class="a" style="left:274px;top:536px" width="628" height="16">
 <defs><linearGradient id="tg1" x1="0" y1="0" x2="0" y2="1"><stop offset="0" stop-color="#f4f6f8"/><stop offset=".5" stop-color="#dfe6ec"/><stop offset="1" stop-color="#c8d2da"/></linearGradient>
 <linearGradient id="tg2" x1="0" y1="0" x2="0" y2="1"><stop offset="0" stop-color="#ffffff"/><stop offset="1" stop-color="#f0f2f4"/></linearGradient></defs>
 <path d="M3 15.5V4.5h72l8 11z" fill="url(#tg1)" stroke="#f8f8f8" stroke-width="1"/>
 <path d="M80 15.5l-3-11h26v11z" fill="url(#tg1)" stroke="#f8f8f8" stroke-width="1"/>
 <path d="M103 15.5V3.5h95l14 12z" fill="url(#tg2)"/><path d="M198.5 3.5l14 12" stroke="#303030" stroke-width="1.2"/><path d="M75 4.5l8 11" stroke="#505860" stroke-width="1"/><path d="M102 4.5v11" stroke="#606060" stroke-width="1"/>
</svg>
<div class="t" style="left:287.5px;top:541.72px;font-size:8.6px;letter-spacing:-.1px;color:#111;">Selected Props</div>
<div class="t" style="left:361px;top:541.72px;font-size:8.6px;color:#111;">log</div>
<div class="t" style="left:384px;top:541.18px;font-size:9px;font-weight:bold;">Circular Gear Module</div>
<div class="gb" style="left:242.8px;top:570.6px;width:104.2px;height:152.0px"></div>
<div class="t" style="left:249.5px;top:568.30px;font-size:8.5px;background:#d0cec8;padding:0 1px;">Wheel</div>
<div class="t" style="left:261px;top:580.10px;font-size:8.5px;">Teeth</div>
<div class="win" style="left:254.5px;top:588.5px;width:25.5px;height:15.0px"></div>
<div class="t" style="left:258.0px;top:591.67px;font-size:8.9px;">9</div>
<div class="spn" style="left:282px;top:590px;width:12.5px;height:13.5px"><svg width="12.5" height="13.5" style="position:absolute;left:0;top:0"><path d="M4.8 4.5h3l-1.5-1.5z M4.8 9.0h3l-1.5 1.5z" fill="#222" stroke="#222" stroke-width=".6"/><path d="M1 6.8h10.5" stroke="#404040" stroke-width="1"/></svg></div>
<div class="gb" style="left:243.2px;top:609.6px;width:44.3px;height:94.4px"></div>
<div class="t" style="left:249px;top:607.30px;font-size:8.5px;background:#d0cec8;padding:0 1px;">Mods</div>
<div class="t" style="left:255.5px;top:618.10px;font-size:8.5px;">Shift</div>
<div class="win" style="left:254px;top:628px;width:27px;height:14.5px"></div>
<div class="t" style="left:257.5px;top:630.92px;font-size:8.9px;">0</div>
<div class="t" style="left:254.5px;top:645.30px;font-size:8.5px;">Stub</div>
<div class="win" style="left:254px;top:655.2px;width:27px;height:13.799999999999955px"></div>
<div class="t" style="left:257.5px;top:657.77px;font-size:8.9px;">1</div>
<div class="t" style="left:255px;top:674.40px;font-size:8.5px;">Width</div>
<div class="win" style="left:254px;top:685.6px;width:27px;height:14.399999999999977px"></div>
<div class="t" style="left:257.5px;top:688.47px;font-size:8.9px;">0.5</div>
<div class="a" style="left:292px;top:630px;width:55px;height:14px;background:#d0cec8"></div>
<div class="wcb" style="left:293.5px;top:633px"></div>
<div class="t" style="left:307.5px;top:634.30px;font-size:8.5px;">Rack Shift</div>
<div class="a" style="left:292px;top:671px;width:53px;height:31px;background:#d0cec8"></div>
<div class="wcb" style="left:293.5px;top:673px"></div>
<div class="t" style="left:307px;top:673.80px;font-size:8.5px;">Planetary</div>
<div class="wcb" style="left:293.5px;top:690.2px"></div>
<div class="t" style="left:307px;top:690.80px;font-size:8.5px;">Rght Hnd</div>
<div class="gb" style="left:349.2px;top:569.3px;width:61.6px;height:153.3px"></div>
<div class="t" style="left:356px;top:567.00px;font-size:8.5px;background:#d0cec8;padding:0 1px;">Pinion</div>
<div class="t" style="left:367.7px;top:580.50px;font-size:8.5px;">Teeth</div>
<div class="win" style="left:360.4px;top:589.5px;width:27.600000000000023px;height:14.700000000000045px"></div>
<div class="t" style="left:363.9px;top:592.52px;font-size:8.9px;">9</div>
<div class="spn" style="left:391.5px;top:590px;width:12.899999999999977px;height:15px"><svg width="12.899999999999977" height="15" style="position:absolute;left:0;top:0"><path d="M4.9 4.5h3l-1.5-1.5z M4.9 10.5h3l-1.5 1.5z" fill="#222" stroke="#222" stroke-width=".6"/><path d="M1 7.5h10.899999999999977" stroke="#404040" stroke-width="1"/></svg></div>
<div class="gb" style="left:349.9px;top:610.8px;width:43.9px;height:94.3px"></div>
<div class="t" style="left:355.5px;top:608.50px;font-size:8.5px;background:#d0cec8;padding:0 1px;">Mods</div>
<div class="t" style="left:362.5px;top:618.30px;font-size:8.5px;">Shift</div>
<div class="win" style="left:360.4px;top:628px;width:27.600000000000023px;height:14.799999999999955px"></div>
<div class="t" style="left:363.9px;top:631.07px;font-size:8.9px;">0</div>
<div class="t" style="left:362.5px;top:645.80px;font-size:8.5px;">Stub</div>
<div class="win" style="left:360.4px;top:655.2px;width:27.600000000000023px;height:14.299999999999955px"></div>
<div class="t" style="left:363.9px;top:658.02px;font-size:8.9px;">1</div>
<div class="t" style="left:361.5px;top:674.10px;font-size:8.5px;">Width</div>
<div class="win" style="left:360.4px;top:685.5px;width:27.600000000000023px;height:14.5px"></div>
<div class="t" style="left:363.9px;top:688.42px;font-size:8.9px;">0.5</div>
<div class="a" style="left:352px;top:707px;width:55px;height:14px;background:#d0cec8"></div>
<div class="wcb" style="left:355.2px;top:710.8px"></div>
<div class="t" style="left:368.4px;top:711.50px;font-size:8.5px;">Rght Hnd</div>
<div class="btn" style="left:421.8px;top:561.6px;width:60.0px;height:18.0px"></div>
<div class="t" style="left:421.8px;width:60.0px;text-align:center;top:566.60px;font-size:8.5px;">ReGen</div>
<div class="gb" style="left:414.4px;top:585.9px;width:68.2px;height:136.3px"></div>
<div class="t" style="left:421px;top:583.60px;font-size:8.5px;background:#d0cec8;padding:0 1px;">Size Params</div>
<div class="t" style="left:443px;top:596.30px;font-size:8.5px;">DP</div>
<div class="win" style="left:420px;top:607.2px;width:56.39999999999998px;height:14.399999999999977px"></div>
<div class="t" style="left:420px;width:56.39999999999998px;text-align:center;top:610.07px;font-size:8.9px;">11.9798</div>
<div class="t" style="left:431.5px;top:625.30px;font-size:8.5px;">Module</div>
<div class="win" style="left:421.8px;top:635.5px;width:55.19999999999999px;height:15.899999999999977px"></div>
<div class="t" style="left:425.3px;top:639.12px;font-size:8.9px;">2.12023573(</div>
<div class="t" style="left:423.6px;top:659.80px;font-size:8.5px;">Pressure Angle</div>
<div class="win" style="left:432px;top:670.6px;width:27px;height:14.399999999999977px"></div>
<div class="t" style="left:436px;top:673.47px;font-size:8.9px;">14.5</div>
<div class="t" style="left:429px;top:689.80px;font-size:8.5px;">Rack Fillet</div>
<div class="win" style="left:433.8px;top:700px;width:26.399999999999977px;height:15px"></div>
<div class="t" style="left:437.3px;top:703.17px;font-size:8.9px;">0</div>
<div class="btn" style="left:491px;top:562.2px;width:59.799999999999955px;height:16.199999999999932px"></div>
<div class="t" style="left:491px;width:59.799999999999955px;text-align:center;top:566.30px;font-size:8.5px;">Calculator</div>
<div class="btn" style="left:491px;top:582px;width:59.799999999999955px;height:16px"></div>
<div class="t" style="left:491px;width:59.799999999999955px;text-align:center;top:586.00px;font-size:8.5px;">AutoTrain</div>
<div class="btn" style="left:493px;top:601.8px;width:58.799999999999955px;height:16.800000000000068px"></div>
<div class="t" style="left:493px;width:58.799999999999955px;text-align:center;top:606.20px;font-size:8.5px;">Library</div>
<div class="gb" style="left:485.8px;top:626.7px;width:64.7px;height:44.6px"></div>
<div class="t" style="left:492.5px;top:624.40px;font-size:8.5px;background:#d0cec8;padding:0 1px;">Tooth Form</div>
<div class="a" style="left:490px;top:635px;width:59px;height:27px;background:#d0cec8"></div>
<div class="rad" style="left:491.3px;top:636.3px"><i></i></div>
<div class="t" style="left:504.7px;top:637.20px;font-size:8.5px;">Involute</div>
<div class="rad" style="left:491.3px;top:651.7px"></div>
<div class="t" style="left:504.7px;top:652.80px;font-size:8.5px;">Epicylcoidal</div>
<div class="gb" style="left:487.5px;top:675.8px;width:60.5px;height:46.2px"></div>
<div class="t" style="left:496px;top:684.40px;font-size:8.5px;">Face Width</div>
<div class="win" style="left:503.3px;top:700px;width:27.400000000000034px;height:14.700000000000045px"></div>
<div class="t" style="left:506.8px;top:703.02px;font-size:8.9px;">0.8</div>
<div class="btn" style="left:583.6px;top:562.2px;width:89.29999999999995px;height:18.399999999999977px"></div>
<div class="t" style="left:583.6px;width:89.29999999999995px;text-align:center;top:567.40px;font-size:8.5px;">Add Wheel to Proj</div>
<div class="btn" style="left:679.7px;top:562.2px;width:89.59999999999991px;height:18.399999999999977px"></div>
<div class="t" style="left:679.7px;width:89.59999999999991px;text-align:center;top:567.40px;font-size:8.5px;">Add Pinion to Proj</div>
<div class="gb" style="left:552.4px;top:585.3px;width:215.9px;height:136.7px"></div>
<div class="t" style="left:558.5px;top:583.00px;font-size:8.5px;background:#d0cec8;padding:0 1px;">Type</div>
<div class="rad" style="left:559.7px;top:598.8px"><i></i></div>
<div class="a" style="left:571px;top:597.8px;width:22px;height:13px;background:#d0cec8"></div>
<div class="t" style="left:573px;top:600.60px;font-size:8.5px;">Spur</div>
<div class="rad" style="left:559.7px;top:614px"></div>
<div class="a" style="left:571px;top:613px;width:30px;height:13px;background:#d0cec8"></div>
<div class="t" style="left:573px;top:615.80px;font-size:8.5px;">Helical</div>
<div class="rad" style="left:559.7px;top:629.2px"></div>
<div class="a" style="left:571px;top:628.2px;width:33px;height:13px;background:#d0cec8"></div>
<div class="t" style="left:573px;top:631.00px;font-size:8.5px;">Knuckle</div>
<div class="rad" style="left:559.7px;top:645.2px"></div>
<div class="a" style="left:571px;top:644.2px;width:52px;height:13px;background:#d0cec8"></div>
<div class="t" style="left:573px;top:647.00px;font-size:8.5px;">Herringbone</div>
<div class="rad" style="left:559.7px;top:660.4px"></div>
<div class="a" style="left:571px;top:659.4px;width:25px;height:13px;background:#d0cec8"></div>
<div class="t" style="left:573px;top:662.20px;font-size:8.5px;">Bevel</div>
<div class="t" style="left:600px;top:615.80px;font-size:8.5px;letter-spacing:.4px;">----&gt;</div>
<div class="t" style="left:604px;top:662.20px;font-size:8.5px;letter-spacing:.5px;">--&gt;</div>
<div class="gb" style="left:621.3px;top:592.5px;width:138.4px;height:47.8px"></div>
<div class="t" style="left:627.5px;top:590.20px;font-size:8.5px;background:#d0cec8;padding:0 1px;">Helical/Bevel Angles</div>
<div class="t" style="left:631px;top:599.60px;font-size:8.5px;">Wheel</div>
<div class="t" style="left:673.5px;top:599.60px;font-size:8.5px;">Pinion</div>
<div class="t" style="left:708.5px;top:599.60px;font-size:8.5px;">Shaft Angle</div>
<div class="win" style="left:624.4px;top:609.2px;width:38.10000000000002px;height:14.299999999999955px"></div>
<div class="t" style="left:627.9px;top:612.02px;font-size:8.9px;">45</div>
<div class="win" style="left:666.5px;top:609.2px;width:38.0px;height:14.299999999999955px"></div>
<div class="t" style="left:670.0px;top:612.02px;font-size:8.9px;">45</div>
<div class="win" style="left:706.5px;top:609.2px;width:46.5px;height:14.299999999999955px"></div>
<div class="t" style="left:710.0px;top:612.02px;font-size:8.9px;">90</div>
<div class="a" style="left:627px;top:626px;width:56px;height:13px;background:#d0cec8"></div>
<div class="wcb" style="left:628.5px;top:627.8px"></div>
<div class="t" style="left:641.5px;top:629.30px;font-size:8.5px;">No Resize</div>
<div class="gb" style="left:625.6px;top:649.1px;width:114.9px;height:46.7px"></div>
<div class="t" style="left:632px;top:646.80px;font-size:8.5px;background:#d0cec8;padding:0 1px;">Bevel Params</div>
<div class="rad" style="left:633.1px;top:658.8px"><i></i></div>
<div class="t" style="left:646.5px;top:660.00px;font-size:8.5px;">Straight</div>
<div class="rad" style="left:633.1px;top:671.2px"></div>
<div class="t" style="left:646.5px;top:672.40px;font-size:8.5px;">Helical</div>
<div class="rad" style="left:633.1px;top:683.8px"></div>
<div class="t" style="left:646.5px;top:685.00px;font-size:8.5px;">Zerol</div>
<div class="a" style="left:688px;top:656px;width:48px;height:13px;background:#d0cec8"></div>
<div class="wcb" style="left:690.4px;top:657.4px"></div>
<div class="t" style="left:703.5px;top:658.30px;font-size:8.5px;">Gleason</div>
</body></html>
